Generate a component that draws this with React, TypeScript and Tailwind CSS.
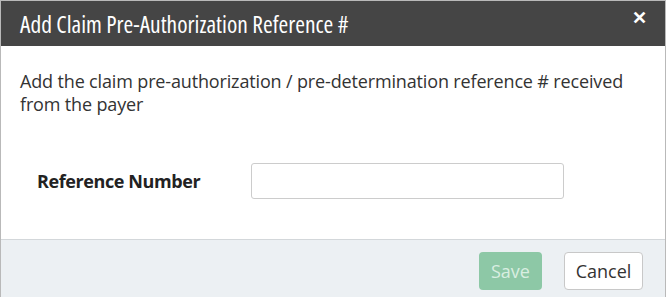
export default function App() {
  return (
    <div className="w-[666px] h-[297px] overflow-hidden bg-white font-['Open_Sans',sans-serif] border-x border-t border-[#b9b9b9] flex flex-col">
      {/* Header */}
      <div className="h-[45px] shrink-0 bg-[#454545] flex items-center justify-between pl-[19px] pr-[18px]">
        <h2 className="text-white text-[23.5px] leading-[30px] [font-stretch:80%]">Add Claim Pre-Authorization Reference #</h2>
        <button className="text-white text-[18px] font-bold leading-none -mt-[14px]">✕</button>
      </div>

      {/* Body */}
      <div className="flex-1 px-[19px] pt-[24px]">
        <p className="text-[18px] leading-[23px] text-[#333] tracking-[-0.15px]">
          Add the claim pre-authorization / pre-determination reference # received from the payer
        </p>
        <div className="mt-[47px] flex items-center">
          <label className="w-[231px] pl-[17px] text-[18px] font-bold text-[#222] tracking-[-0.4px]">Reference Number</label>
          <input type="text" className="w-[313px] h-[36px] rounded-[3px] border border-[#ccc] px-2 outline-none" />
        </div>
      </div>

      {/* Footer */}
      <div className="h-[58px] shrink-0 border-t border-[#d3d7da] bg-[#ecf0f3] flex items-start justify-end gap-[22px] pt-[12px] pr-[22px]">
        <button disabled className="h-[38px] w-[63px] rounded-[4px] bg-[#8dc8a6] text-[#d9eee1] text-[18px]">Save</button>
        <button className="h-[38px] w-[79px] rounded-[4px] border border-[#c8c8c8] bg-white text-[#333] text-[18px]">Cancel</button>
      </div>
    </div>
  );
}
